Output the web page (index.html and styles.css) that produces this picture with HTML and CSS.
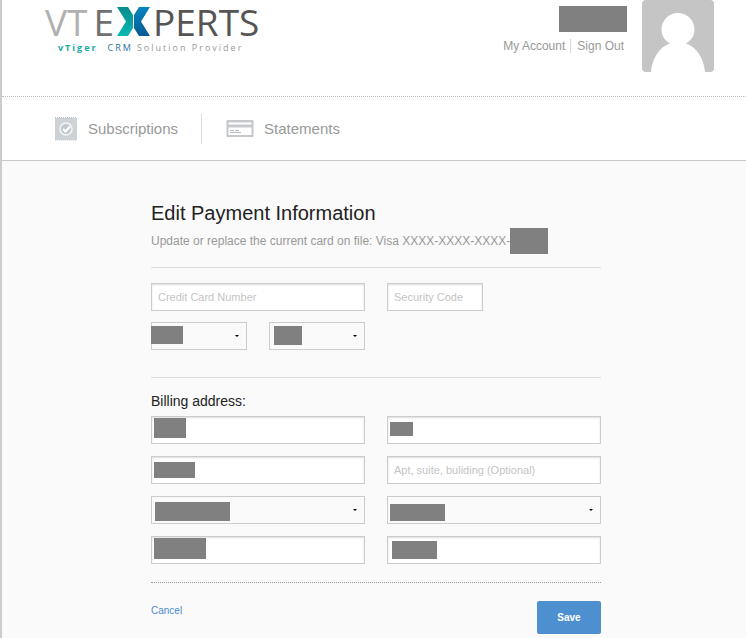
FILE: index.html
```html
<!DOCTYPE html>
<html lang="en">
<head>
  <meta charset="UTF-8">
  <meta name="viewport" content="width=device-width, initial-scale=1">
  <title>Edit Payment Information</title>
  <link rel="stylesheet" href="styles.css">
</head>
<body>

<header class="header">
  <a class="logo" href="#">
    <span class="logo-name">
      <span class="logo-vt">VT</span>
      <span class="logo-e">E</span>
      <svg class="logo-x" width="34" height="29" viewBox="0 0 34 29" aria-label="X">
        <defs>
          <linearGradient id="teal" x1="0" y1="0" x2="0" y2="1">
            <stop offset="0" stop-color="#078b8f"/>
            <stop offset="1" stop-color="#08b8b2"/>
          </linearGradient>
          <linearGradient id="blue" x1="0" y1="0" x2="0" y2="1">
            <stop offset="0" stop-color="#0784c0"/>
            <stop offset="1" stop-color="#075b92"/>
          </linearGradient>
        </defs>
        <path fill="url(#teal)" d="M0 0H11L16 8V21L11 29H0L9 14.500Z"/>
        <path fill="url(#blue)" d="M33 0H22L17 8V21L22 29H33L24 14.500Z"/>
      </svg>
      <span class="logo-perts">PERTS</span>
    </span>
    <span class="logo-tagline"><b>vTiger</b><em>CRM</em><span>Solution Provider</span></span>
  </a>
  <div class="account">
    <div class="account-info">
      <span class="account-name"></span>
      <div class="account-links">
        <a href="#">My Account</a>
        <a href="#">Sign Out</a>
      </div>
    </div>
    <svg class="avatar" width="72" height="72" viewBox="0 0 72 72" aria-hidden="true">
      <rect width="72" height="72" rx="4" fill="#c5c5c5"/>
      <path fill="#fff" d="M9 72C10 59 17 47 28 43.500C22 40 19.500 35 19.500 29.500A16.500 16.500 0 0 1 52.500 29.500C52.500 35 50 40 44 43.500C55 47 62 59 63 72Z"/>
    </svg>
  </div>
</header>

<nav class="nav">
  <a class="nav-item" href="#">
    <svg width="24" height="26" viewBox="0 0 24 26" aria-hidden="true">
      <path fill="#cdd2d6" d="M1 2H23V24H1Z"/>
      <path stroke="#b9bfc4" stroke-dasharray="1 1" d="M1 1.500H23"/>
      <path stroke="#dde0e3" stroke-dasharray="1 1" d="M1 24.500H23"/>
      <circle cx="12" cy="13" r="6" fill="#c3c9ce" stroke="#f5f6f7" stroke-width="1.500"/>
      <path fill="none" stroke="#fff" stroke-width="2" d="M9 13L11.500 15.500L16 10.500"/>
    </svg>
    Subscriptions
  </a>
  <a class="nav-item" href="#">
    <svg width="28" height="18" viewBox="0 0 28 18" aria-hidden="true">
      <rect x="0.500" width="27" height="17" rx="1" fill="#c4c8cd"/>
      <path fill="#fff" d="M2.500 2.500H25.500V4.500H2.500ZM2.500 7.500H25.500V15H2.500Z"/>
      <path fill="none" stroke="#b6bbc0" d="M4 10.500H8M9 10.500H13M4 12.500H15"/>
    </svg>
    Statements
  </a>
</nav>

<main class="main">
  <form class="payment">
    <h1>Edit Payment Information</h1>
    <p class="current-card">Update or replace the current card on file: Visa XXXX-XXXX-XXXX-<span class="card-mask"></span></p>

    <div class="fields card-fields">
      <input type="text" placeholder="Credit Card Number" aria-label="Credit Card Number">
      <div class="pair">
        <input type="text" placeholder="Security Code" aria-label="Security Code">
      </div>
      <div class="pair">
        <div class="field">
          <select aria-label="Expiration month"></select>
          <span class="mask mask-month"></span>
        </div>
        <div class="field">
          <select aria-label="Expiration year"></select>
          <span class="mask mask-year"></span>
        </div>
      </div>
    </div>

    <h2>Billing address:</h2>
    <div class="fields">
      <div class="field">
        <input type="text" aria-label="First name">
        <span class="mask mask-first"></span>
      </div>
      <div class="field">
        <input type="text" aria-label="Last name">
        <span class="mask mask-last"></span>
      </div>
      <div class="field">
        <input type="text" aria-label="Street address">
        <span class="mask mask-street"></span>
      </div>
      <input type="text" placeholder="Apt, suite, buliding (Optional)" aria-label="Apt, suite, building">
      <div class="field">
        <select aria-label="Country"></select>
        <span class="mask mask-country"></span>
      </div>
      <div class="field">
        <select aria-label="State"></select>
        <span class="mask mask-state"></span>
      </div>
      <div class="field">
        <input type="text" aria-label="City">
        <span class="mask mask-city"></span>
      </div>
      <div class="field">
        <input type="text" aria-label="Zip code">
        <span class="mask mask-zip"></span>
      </div>
    </div>

    <div class="actions">
      <a href="#">Cancel</a>
      <button type="submit">Save</button>
    </div>
  </form>
</main>

</body>
</html>
```
FILE: styles.css
```css
* {
  margin: 0;
  padding: 0;
  box-sizing: border-box;
}

body {
  min-height: 100vh;
  border-left: 2px solid #cbccd2;
  background: #fafafa;
  font-family: "Liberation Sans", Arial, sans-serif;
  font-size: 12px;
  color: #222;
}

a {
  text-decoration: none;
}

svg {
  display: block;
  flex: none;
}

/* header */
.header {
  display: flex;
  justify-content: space-between;
  height: 97px;
  padding: 0 32px 0 43px;
  background: #fff;
  border-bottom: 1px dotted #bbb;
}

.logo {
  font-family: "Open Sans", "Noto Sans", sans-serif;
}

.logo-name {
  display: flex;
  align-items: center;
  gap: 2px;
  height: 43px;
  font-size: 37px;
  line-height: 43px;
}

.logo-vt {
  margin-right: 4px;
  color: #b0b0b0;
  font-weight: 500;
}

.logo-e {
  margin-right: 1px;
  color: #707070;
  font-weight: 500;
}

.logo-perts {
  color: #555;
  font-weight: 500;
}

.logo-tagline {
  display: flex;
  gap: 10px;
  padding-left: 13px;
  font-size: 9px;
  line-height: 10px;
  letter-spacing: 2px;
  color: #999;
}

.logo-tagline b {
  color: #16aaa9;
}

.logo-tagline em {
  font-style: normal;
  color: #2a7099;
}

.logo-tagline span {
  margin-left: -6px;
}

.account {
  display: flex;
  gap: 15px;
}

.account-info {
  padding-top: 6px;
}

.account-name {
  display: block;
  width: 68px;
  height: 26px;
  margin-left: auto;
  background: #808080;
}

.account-links {
  display: flex;
  padding: 7px 3px 0 0;
}

.account-links a {
  line-height: 14px;
  color: #999;
}

.account-links a + a {
  margin-left: 5px;
  padding-left: 6px;
  border-left: 1px solid #d5d8dd;
}

/* navigation */
.nav {
  display: flex;
  align-items: center;
  height: 64px;
  padding-left: 52px;
  background: #fff;
  border-bottom: 1px solid #c8c8c8;
}

.nav-item {
  display: flex;
  align-items: center;
  gap: 10px;
  height: 30px;
  font-size: 15px;
  color: #999;
}

.nav-item + .nav-item {
  margin-left: 23px;
  padding-left: 24px;
  border-left: 1px solid #ddd;
}

/* payment form */
.main {
  padding: 40px 16px 4px 20px;
}

.payment {
  max-width: 450px;
  margin: 0 auto;
}

h1 {
  font-size: 20px;
  font-weight: normal;
  line-height: 24px;
}

.current-card {
  display: flex;
  align-items: center;
  height: 32px;
  color: #999;
}

.card-mask {
  width: 38px;
  height: 26px;
  background: #808080;
}

.fields {
  display: grid;
  grid-template-columns: 1fr 1fr;
  gap: 12px 22px;
}

.card-fields {
  row-gap: 11px;
  margin-top: 10px;
  padding: 15px 0 27px;
  border-top: 1px solid #ddd;
  border-bottom: 1px solid #ddd;
}

.pair {
  display: grid;
  grid-template-columns: 1fr 1fr;
  gap: 22px;
}

.field {
  position: relative;
}

input,
select {
  display: block;
  width: 100%;
  height: 28px;
  padding: 0 6px;
  border: 1px solid #ccc;
  border-radius: 0;
  font: 11px "Liberation Sans", Arial, sans-serif;
  color: #333;
}

input {
  background: #fff;
  box-shadow: inset 0 1px 2px #ddd;
}

input::placeholder {
  color: #c4c4c4;
}

select {
  appearance: none;
  background: #fafafa;
}

/* arrow of the drop-down */
.field:has(select)::after {
  content: "";
  position: absolute;
  top: 13px;
  right: 8px;
  border: 2px solid transparent;
  border-top-color: #000;
  border-bottom: 0;
}

.mask {
  position: absolute;
  background: #808080;
}

.mask-month {
  top: 4px;
  left: 0;
  width: 32px;
  height: 18px;
}

.mask-year {
  top: 4px;
  left: 5px;
  width: 28px;
  height: 19px;
}

.mask-first {
  top: 2px;
  left: 3px;
  width: 32px;
  height: 20px;
}

.mask-last {
  top: 6px;
  left: 3px;
  width: 23px;
  height: 14px;
}

.mask-street {
  top: 6px;
  left: 3px;
  width: 41px;
  height: 16px;
}

.mask-country {
  top: 6px;
  left: 4px;
  width: 75px;
  height: 19px;
}

.mask-state {
  top: 8px;
  left: 3px;
  width: 55px;
  height: 17px;
}

.mask-city {
  top: 2px;
  left: 3px;
  width: 52px;
  height: 21px;
}

.mask-zip {
  top: 5px;
  left: 5px;
  width: 45px;
  height: 18px;
}

h2 {
  padding: 14px 0 6px;
  font-size: 14px;
  font-weight: normal;
  line-height: 18px;
}

.actions {
  display: flex;
  justify-content: space-between;
  margin-top: 18px;
  padding-top: 18px;
  border-top: 1px dotted #999;
}

.actions a {
  padding-top: 4px;
  font-size: 10px;
  line-height: 12px;
  color: #4a8ccc;
}

.actions button {
  width: 64px;
  height: 33px;
  border: 0;
  border-radius: 2px;
  background: #4e8fd0;
  font: bold 10px "Liberation Sans", Arial, sans-serif;
  color: #fff;
}
```
